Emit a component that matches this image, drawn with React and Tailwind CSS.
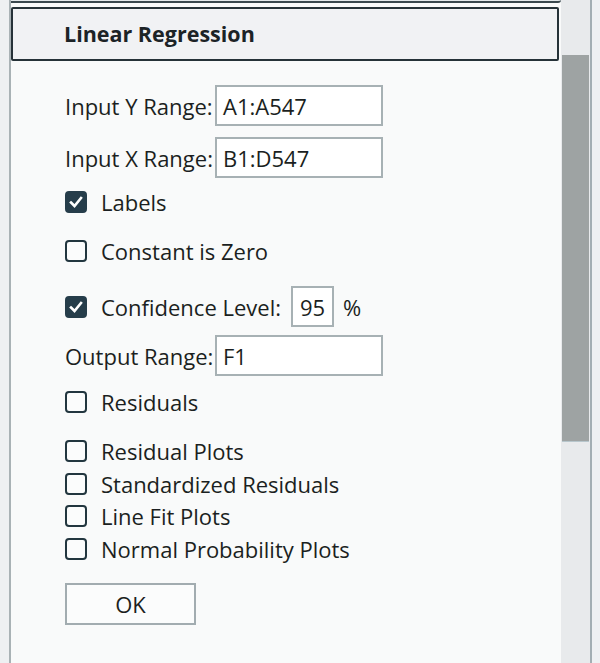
import { useState } from 'react'

const Checkbox = ({ checked, onChange }) => (
  <button
    type="button"
    onClick={onChange}
    className={`w-[22px] h-[22px] shrink-0 rounded-[4px] border-2 flex items-center justify-center ${
      checked ? 'bg-[#263d4a] border-[#263d4a]' : 'bg-[#fbfcfc] border-[#22363f]'
    }`}
  >
    {checked && (
      <svg viewBox="0 0 16 16" className="w-[16px] h-[16px]">
        <path d="M3 8.5 L6.5 12 L13 4" fill="none" stroke="white" strokeWidth="2.6" strokeLinecap="square" />
      </svg>
    )}
  </button>
)

const CheckRow = ({ label, checked, onChange, className = '', children }) => (
  <div className={`flex items-center ${className}`}>
    <Checkbox checked={checked} onChange={onChange} />
    <span className="ml-[14px]">{label}</span>
    {children}
  </div>
)

const RangeInput = ({ label, value }) => (
  <div className="flex items-center h-[41px]">
    <span className="w-[150px] shrink-0 whitespace-nowrap">{label}</span>
    <div className="w-[168px] h-full border-2 border-[#a7b1b4] bg-white flex items-center px-[6px]">
      {value}
    </div>
  </div>
)

export default function App() {
  const [opts, setOpts] = useState({
    labels: true,
    zero: false,
    confidence: true,
    residuals: false,
    residualPlots: false,
    standardized: false,
    lineFit: false,
    normal: false,
  })

  const toggle = (k) => () => setOpts((o) => ({ ...o, [k]: !o[k] }))

  return (
    <div className="flex w-[600px] h-[663px] overflow-hidden bg-[#eef0f2] text-[#1b1f21] text-[22px] leading-none font-['Open_Sans',sans-serif]">
      {/* left gutter */}
      <div className="w-[9px] shrink-0" />

      {/* main column */}
      <div className="w-[552px] shrink-0 flex flex-col border-l-2 border-[#a9b2b5] bg-[#f9fafa]">
        <div className="h-[3px] border-b-2 border-[#3a484e] bg-[#e4e9eb] rounded-br-[3px]" />
        <div className="h-[4px]" />

        {/* header */}
        <div className="h-[54px] mr-[2px] border-2 border-[#263238] bg-[#f1f2f4] flex items-center pl-[51px] rounded-[2px]">
          <span className="font-bold text-[21.5px] text-[#1c2326]">Linear Regression</span>
        </div>

        {/* body */}
        <div className="flex-1 flex flex-col pl-[54px] pt-[24px]">
          <RangeInput label="Input Y Range:" value="A1:A547" />
          <div className="mt-[11px]">
            <RangeInput label="Input X Range:" value="B1:D547" />
          </div>

          <CheckRow className="h-[32px] mt-[8px]" label="Labels" checked={opts.labels} onChange={toggle('labels')} />
          <CheckRow className="h-[32px] mt-[17px]" label="Constant is Zero" checked={opts.zero} onChange={toggle('zero')} />

          <CheckRow className="h-[41px] mt-[19px]" label="Confidence Level:" checked={opts.confidence} onChange={toggle('confidence')}>
            <div className="ml-[10px] w-[43px] h-full border-2 border-[#a7b1b4] bg-white flex items-center justify-center">95</div>
            <span className="ml-[9px]">%</span>
          </CheckRow>

          <div className="mt-[8px]">
            <RangeInput label="Output Range:" value="F1" />
          </div>

          <CheckRow className="h-[32px] mt-[10px]" label="Residuals" checked={opts.residuals} onChange={toggle('residuals')} />

          <div className="flex flex-col mt-[17px]">
            <CheckRow className="h-[32.5px]" label="Residual Plots" checked={opts.residualPlots} onChange={toggle('residualPlots')} />
            <CheckRow className="h-[32.5px]" label="Standardized Residuals" checked={opts.standardized} onChange={toggle('standardized')} />
            <CheckRow className="h-[32.5px]" label="Line Fit Plots" checked={opts.lineFit} onChange={toggle('lineFit')} />
            <CheckRow className="h-[32.5px]" label="Normal Probability Plots" checked={opts.normal} onChange={toggle('normal')} />
          </div>

          <button
            type="button"
            className="mt-[18px] w-[131px] h-[42px] border-2 border-[#a2acb0] bg-[#fbfcfc] flex items-center justify-center"
          >
            OK
          </button>
        </div>
      </div>

      {/* scrollbar */}
      <div className="w-[29px] shrink-0 bg-[#e8eaec] flex flex-col">
        <div className="h-[55px]" />
        <div className="h-[387px] ml-[1px] w-[27px] bg-[#9ea3a3] border-b border-[#b7c6cc]" />
      </div>
      <div className="w-[2px] shrink-0 bg-[#a3aeb3]" />
      <div className="flex-1" />
    </div>
  )
}
